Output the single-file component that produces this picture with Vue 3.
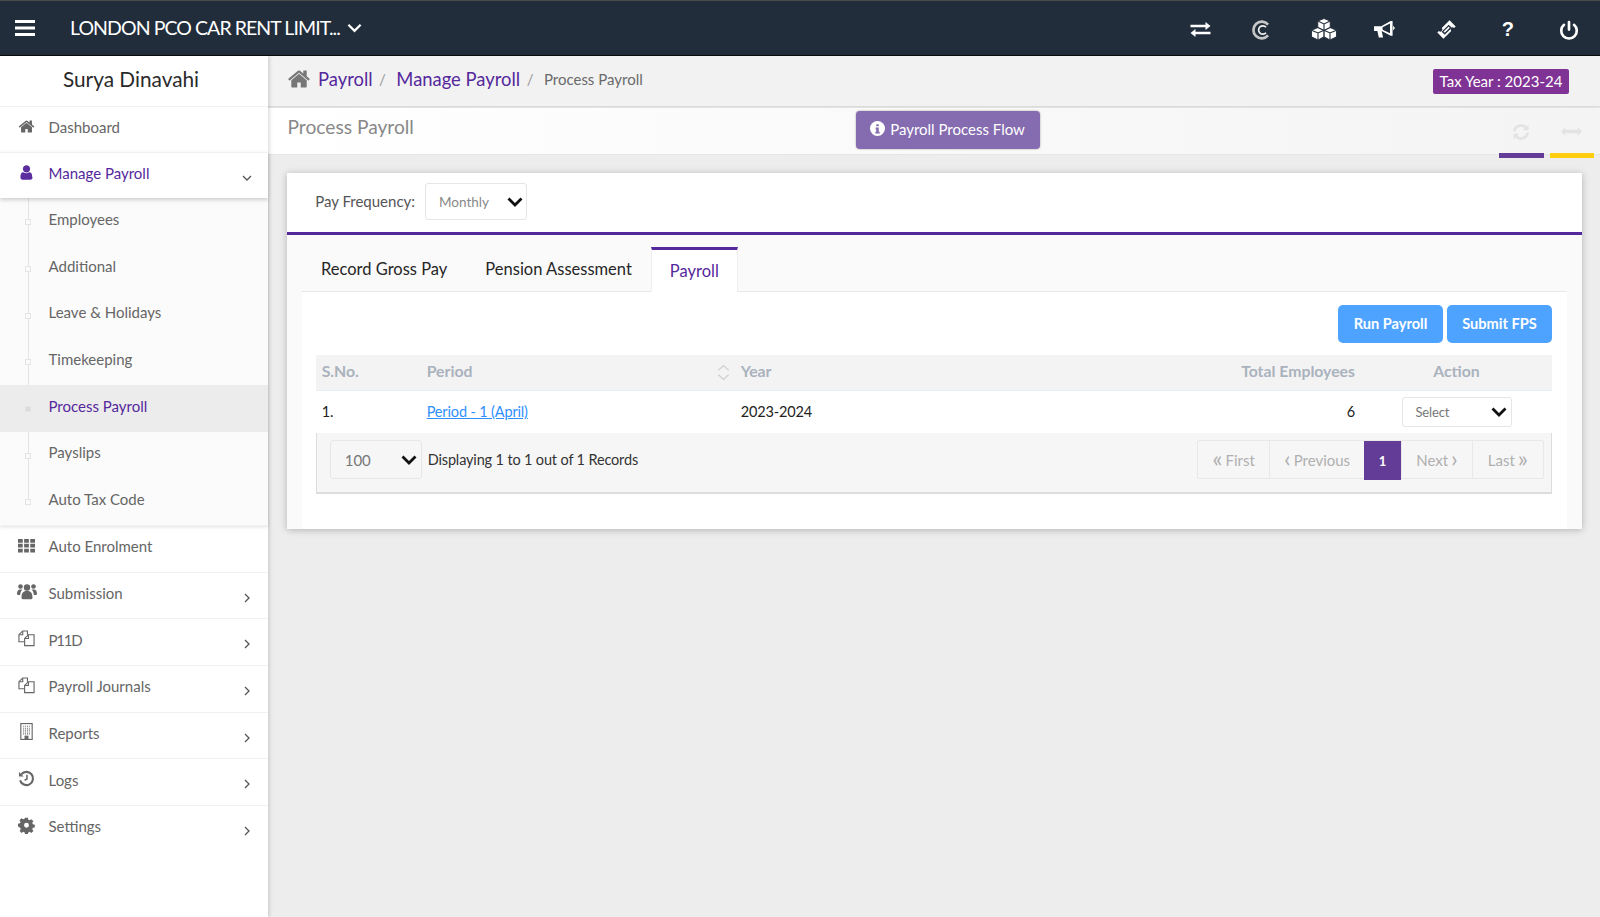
<script setup>
const subItems = [
  { label: 'Employees' }, { label: 'Additional' }, { label: 'Leave & Holidays' }, { label: 'Timekeeping' },
  { label: 'Process Payroll', active: true }, { label: 'Payslips' }, { label: 'Auto Tax Code' }
]
const lowerItems = [
  { label: 'Auto Enrolment', icon: 'grid' },
  { label: 'Submission', icon: 'users', arrow: true },
  { label: 'P11D', icon: 'docs', arrow: true, tight: true },
  { label: 'Payroll Journals', icon: 'docs', arrow: true },
  { label: 'Reports', icon: 'building', arrow: true },
  { label: 'Logs', icon: 'history', arrow: true },
  { label: 'Settings', icon: 'cog', arrow: true }
]
const pages = [
  { pre: '«', text: 'First', w: 71 },
  { pre: '‹', text: 'Previous', w: 95 },
  { text: '1', on: true, w: 37 },
  { text: 'Next', post: '›', w: 71 },
  { text: 'Last', post: '»', w: 71 }
]
const homePath = 'M1472 992v480q0 26-19 45t-45 19h-384v-384h-256v384h-384q-26 0-45-19t-19-45v-480q0-1 .5-3t.5-3l575-474 575 474q1 2 1 6zm223-69l-62 74q-8 9-21 11h-3q-13 0-21-7l-692-577-692 577q-12 8-24 7-13-2-21-11l-62-74q-8-10-7-23.500t11-21.500l719-599q32-26 76-26t76 26l244 204v-195q0-14 9-23t23-9h192q14 0 23 9t9 23v408l219 182q10 8 11 21.500t-7 23.500z'
const userPath = 'M1536 1399q0 109-62.500 187t-150.500 78h-854q-88 0-150.500-79t-62.500-186q0-87 8.500-160.500t31.500-146.500 56-120.500 93-80.500 133-30q125 122 299 122t299-122q76 0 133 30t93 80.500 56 120.500 31.500 146.500 8.500 160.500zm-256-887q0 159-112.500 271.500t-271.500 112.500-271.500-112.500-112.500-271.500 112.500-271.500 271.500-112.500 271.500 112.500 112.500 271.500z'
</script>

<template>
  <div class="app">
    <header class="topbar">
      <svg class="burger" viewBox="0 0 20 16" width="20" height="16"><path d="M0 1.500h20M0 8h20M0 14.500h20" stroke="#fff" stroke-width="3" /></svg>
      <span class="company">LONDON PCO CAR RENT LIMIT...</span>
      <svg class="company-chev" viewBox="0 0 16 10" width="15" height="10"><path d="M1.500 1.500 8 8l6.500-6.500" fill="none" stroke="#fff" stroke-width="2.400" /></svg>
      <div class="top-icons">
        <svg viewBox="0 0 20 15" width="21" height="15" fill="#fff"><path d="M0 2.700h15V0l5 4-5 4V5.300H0zM20 9.700H5V7l-5 4 5 4v-2.700h15z" /></svg>
        <svg viewBox="0 0 24 24" width="20" height="20" fill="none"><path d="M19.300 5.500a10 10 0 1 0 0 13" stroke="#c6c6c6" stroke-width="3.200" /><path d="M16.800 8.800a5 5 0 1 0 0 6.400" stroke="#f2f2f2" stroke-width="2" /></svg>
        <svg viewBox="0 0 26 23" width="26" height="23" fill="#fff" stroke="#222d3b" stroke-width=".9"><path d="M13 .5l6.200 2.600v6.500L13 12.500 6.800 9.600V3.100zM7 9.500l6 2.800v6.500L7 22 .5 18.800v-6.500zM19 9.500l6.500 2.800v6.500L19 22l-6-3.200v-6.500z" /><path d="M6.800 3.100 13 6l6.200-2.900M.5 12.300 7 15l6-2.700M13 12.300 19 15l6.500-2.700M13 6v6.500M7 15v7M19 15v7" fill="none" stroke-width="1.100" /></svg>
        <svg viewBox="0 0 22 20" width="21" height="19" fill="#fff"><path d="M0 6.500h7.500L17.500 1h2v15.500h-2L8 11.500l1.500 7H5L3.500 11.500H0z" /><path d="M16.800 3.800 9 7.500v2.700l7.800 3.700z" fill="#222d3b" /><path d="M20 6l2 2.500-2 2.500z" /></svg>
        <svg viewBox="0 0 24 24" width="21" height="21" fill="#fff"><path d="M15.500 1.500l7 7-1.800 1.800a2.300 2.300 0 0 0-3.300 3.300L8.500 22.500l-7-7 1.800-1.800a2.300 2.300 0 0 0 3.300-3.300z" /><path d="M14.500 6.500 18 10l-8 8-3.500-3.500z" fill="#222d3b" /><path d="M14.400 8.700 15.800 10 10 15.800 8.700 14.400z" /></svg>
        <span class="q">?</span>
        <svg viewBox="0 0 24 24" width="20" height="20" fill="none" stroke="#fff" stroke-width="3.200" stroke-linecap="round"><path d="M12 2.500v9M6 5.800a9.300 9.300 0 1 0 12 0" /></svg>
      </div>
    </header>

    <div class="body">
      <aside class="sidebar">
        <div class="user-name">Surya Dinavahi</div>
        <div class="nav-row">
          <svg class="nav-icon" viewBox="0 0 1792 1792" fill="#666"><path :d="homePath" /></svg>
          <span>Dashboard</span>
        </div>
        <div class="nav-row open">
          <svg class="nav-icon" viewBox="0 0 1792 1792" fill="#5b2d9e"><path :d="userPath" /></svg>
          <span>Manage Payroll</span>
          <svg class="arrow" viewBox="0 0 10 10" width="10" height="10"><path d="M1 3l4 4 4-4" fill="none" stroke="#555" stroke-width="1.300" /></svg>
        </div>
        <div class="sub-list">
          <div v-for="s in subItems" :key="s.label" class="sub-row" :class="{ active: s.active }">
            <i class="tick"></i>
            <span>{{ s.label }}</span>
          </div>
        </div>
        <div v-for="n in lowerItems" :key="n.label" class="nav-row">
          <svg v-if="n.icon === 'grid'" class="nav-icon" viewBox="0 0 18 18" fill="#666"><path d="M0 2h5v4H0zM6.500 2h5v4h-5zM13 2h5v4h-5zM0 7.200h5v4H0zM6.500 7.200h5v4h-5zM13 7.200h5v4h-5zM0 12.400h5v4H0zM6.500 12.400h5v4h-5zM13 12.400h5v4h-5z" /></svg>
          <svg v-else-if="n.icon === 'users'" class="nav-icon wide" viewBox="0 0 20 17" fill="#666"><circle cx="10" cy="4.500" r="3.200" /><circle cx="3.500" cy="3.500" r="2.300" /><circle cx="16.500" cy="3.500" r="2.300" /><path d="M4.500 14.800c0-5 2-7 5.500-7s5.500 2 5.500 7c0 1-1 1.500-2 1.500h-7c-1 0-2-.5-2-1.500zM0 10.500c0-2 1-4 3-4h2.500c-1.500 1.500-2 2.500-2.300 5.500H1c-.5 0-1-.7-1-1.500zM20 10.500c0-2-1-4-3-4h-2.500c1.500 1.500 2 2.500 2.300 5.500H19c.5 0 1-.7 1-1.500z" /></svg>
          <svg v-else-if="n.icon === 'docs'" class="nav-icon" viewBox="0 0 18 18" fill="none" stroke="#666" stroke-width="1.200"><path d="M7 12.500H1V5l4-4h5v4" /><path d="M7 16.500V9l4-4h6v11.500z" /><path d="M5 1v4H1M11 5v4H7" /></svg>
          <svg v-else-if="n.icon === 'building'" class="nav-icon" viewBox="0 0 18 18" fill="none" stroke="#666" stroke-width="1.200"><rect x="3" y="0.600" width="12" height="16.800" /><path d="M5.500 3.500h7M5.500 5.500h7M5.500 7.500h7M5.500 9.500h7M5.500 11.500h7" stroke-dasharray="1 1" /><rect x="7.500" y="14" width="3" height="3.400" fill="#666" /></svg>
          <svg v-else-if="n.icon === 'history'" class="nav-icon" viewBox="0 0 18 18" fill="none" stroke="#666" stroke-width="2.200"><path d="M3.500 4.500A7 7 0 1 1 2.200 11" /><path d="M1 2v5h5z" fill="#666" stroke="none" /><path d="M9.500 5v4.500l-2.500 1.500" stroke-width="1.600" /></svg>
          <svg v-else class="nav-icon" viewBox="0 0 18 18" fill="#666"><path d="M7.500 1h3l.4 2.100 1.500.6 1.800-1.200 2.100 2.100-1.200 1.800.6 1.500 2.100.4v3l-2.100.4-.6 1.500 1.200 1.800-2.100 2.100-1.800-1.200-1.500.6-.4 2.100h-3l-.4-2.100-1.500-.6-1.800 1.200-2.100-2.100 1.200-1.800-.6-1.500L0 10.300v-3l2.100-.4.600-1.500L1.500 3.600l2.100-2.100 1.800 1.200 1.500-.6zM9 6.300a2.600 2.600 0 1 0 0 5.200 2.600 2.600 0 0 0 0-5.200z" transform="translate(0 -.2)" fill-rule="evenodd" /></svg>
          <span :class="{ tight: n.tight }">{{ n.label }}</span>
          <svg v-if="n.arrow" class="arrow" viewBox="0 0 10 10" width="10" height="10"><path d="M3 1l4 4-4 4" fill="none" stroke="#555" stroke-width="1.300" /></svg>
        </div>
      </aside>

      <main class="main">
        <div class="crumbs">
          <svg class="crumb-home" viewBox="0 0 1792 1792" fill="#777"><path :d="homePath" /></svg>
          <a class="crumb-link">Payroll</a><span class="sep">/</span>
          <a class="crumb-link">Manage Payroll</a><span class="sep">/</span>
          <span class="crumb-cur">Process Payroll</span>
          <span class="tax">Tax Year : 2023-24</span>
        </div>

        <div class="title-bar">
          <h1>Process Payroll</h1>
          <button class="flow-btn">
            <svg viewBox="0 0 24 24" width="15" height="15"><circle cx="12" cy="12" r="12" fill="#fff" /><path d="M10 5h4v3.500h-4zM9 10.500h5V17h1.500v3h-7v-3H10v-3.500H9z" fill="#856cb0" /></svg>
            <span>Payroll Process Flow</span>
          </button>
          <div class="title-tools">
            <div class="tool">
              <svg viewBox="0 0 24 24" width="20" height="20" fill="none" stroke="#e3e3e3" stroke-width="3.400"><path d="M4 11a8 8 0 0 1 14-4l2 2M20 13a8 8 0 0 1-14 4l-2-2" /><path d="M21 3v7h-7zM3 21v-7h7z" fill="#e3e3e3" stroke="none" /></svg>
              <i class="bar purple"></i>
            </div>
            <div class="tool tool-arrows">
              <svg viewBox="0 0 24 12" width="21" height="11" fill="#e3e3e3"><path d="M0 6l5-5v3h14V1l5 5-5 5V8H5v3z" /></svg>
              <i class="bar yellow"></i>
            </div>
          </div>
        </div>

        <section class="card">
          <div class="freq">
            <label>Pay Frequency:</label>
            <div class="select freq-select">
              <span>Monthly</span>
              <svg viewBox="0 0 16 10" width="16" height="10"><path d="M1.500 1.500 8 8l6.500-6.500" fill="none" stroke="#111" stroke-width="2.800" /></svg>
            </div>
          </div>

          <div class="card-body">
            <div class="tabs">
              <a class="tab">Record Gross Pay</a>
              <a class="tab">Pension Assessment</a>
              <a class="tab current">Payroll</a>
            </div>
            <div class="pane">
              <div class="actions">
                <button class="blue"><span>Run Payroll</span></button>
                <button class="blue"><span>Submit FPS</span></button>
              </div>
              <div class="thead grid-row">
                <span>S.No.</span>
                <span class="period-h">Period
                  <svg viewBox="0 0 14 18" width="13" height="17" fill="none" stroke="#cfcfcf" stroke-width="1.300"><path d="M1.500 6.500 7 1.500l5.500 5M1.500 11.500l5.500 5 5.500-5" /></svg>
                </span>
                <span>Year</span>
                <span class="r">Total Employees</span>
                <span class="c">Action</span>
              </div>
              <div class="tbody grid-row">
                <span>1.</span>
                <a class="period-link">Period - 1 (April)</a>
                <span>2023-2024</span>
                <span class="r">6</span>
                <div class="select act-select">
                  <span>Select</span>
                  <svg viewBox="0 0 16 10" width="16" height="10"><path d="M1.500 1.500 8 8l6.500-6.500" fill="none" stroke="#111" stroke-width="2.800" /></svg>
                </div>
              </div>
              <div class="tfoot">
                <div class="select size-select">
                  <span>100</span>
                  <svg viewBox="0 0 16 10" width="16" height="10"><path d="M1.500 1.500 8 8l6.500-6.500" fill="none" stroke="#111" stroke-width="2.800" /></svg>
                </div>
                <span class="records">Displaying 1 to 1 out of 1 Records</span>
                <div class="pager">
                  <a v-for="p in pages" :key="p.text" class="page" :class="{ on: p.on }" :style="{ width: p.w + 'px' }"><b v-if="p.pre">{{ p.pre }}</b>{{ p.text }}<b v-if="p.post">{{ p.post }}</b></a>
                </div>
              </div>
            </div>
          </div>
        </section>
      </main>
    </div>
  </div>
</template>

<style>
html, body { margin: 0; padding: 0; }
</style>

<style scoped>
* { box-sizing: border-box; }
.app {
  width: 1600px; height: 917px; overflow: hidden; display: flex; flex-direction: column;
  font-family: "Lato", "Noto Sans", sans-serif; background: #ededed; color: #333;
}
.topbar {
  height: 56px; flex: none; display: flex; align-items: center; background: #222d3b;
  border-top: 1px solid #4a4a4a; border-bottom: 1px solid #0c0c0c; padding-left: 15px; color: #fff;
}
.company { margin-left: 35px; font-size: 19.500px; letter-spacing: -0.93px; padding-bottom: 2px; }
.company-chev { margin-left: 7px; }
.top-icons { margin-left: auto; display: grid; grid-template-columns: repeat(7, 1fr); justify-items: center; align-items: center; width: 430px; padding-top: 3px; }
.q { font-size: 20px; font-weight: 700; font-family: "Liberation Sans", sans-serif; }

.body { flex: 1; display: flex; min-height: 0; }
.sidebar {
  width: 268px; flex: none; background: #fff; box-shadow: 1px 0 4px rgba(0,0,0,.18); position: relative; z-index: 2; font-size: 15px; color: #666;
}
.user-name { height: 49.700px; display: flex; align-items: center; justify-content: center; font-size: 20.800px; color: #2a2a2a; padding-bottom: 5px; padding-right: 6px; }
.nav-row {
  height: 46.670px; display: flex; align-items: center; padding-left: 18px; border-top: 1px solid #f2f2f2; position: relative;
}
.nav-row span { margin-left: 13.500px; padding-bottom: 5px; }
.nav-row span.tight { letter-spacing: -1.200px; }
.nav-icon { width: 17px; height: 17px; flex: none; margin-top: -7px; }
.nav-icon.wide { width: 20px; margin-left: -1.500px; margin-right: -1.500px; }
.arrow { position: absolute; right: 16px; top: 20px; }
.nav-row.open { height: 46px; color: #55289c; box-shadow: 0 2px 4px rgba(0,0,0,.18); z-index: 1; }
.sub-list { background: #fbfbfb; position: relative; box-shadow: 0 2px 3px rgba(0,0,0,.12); }
.sub-list::before { content: ""; position: absolute; left: 28px; top: 0; bottom: 20px; width: 1px; background: #e4e4e4; }
.sub-row { height: 46.670px; display: flex; align-items: center; padding-left: 48.500px; position: relative; }
.sub-row span { padding-bottom: 5px; }
.sub-row.active { background: #ececec; color: #55289c; }
.tick { position: absolute; left: 25px; top: 21px; width: 6px; height: 6px; border: 1px solid #e4e4e4; background: #fbfbfb; }
.sub-row.active .tick { background: #dcdcdc; }

.main { flex: 1; min-width: 0; display: flex; flex-direction: column; }
.crumbs {
  height: 50px; flex: none; display: flex; align-items: center; padding: 0 31px 5px 19px; background: #f2f2f2; box-shadow: 0 1px 3px rgba(0,0,0,.12); position: relative; font-size: 18.400px;
}
.crumb-home { width: 24px; height: 24px; margin-right: 7px; }
.crumb-link { color: #55289c; }
.sep { color: #999; font-size: 15px; margin: 0 10.500px 0 6.500px; }
.crumb-cur { color: #6a6a6a; font-size: 15px; }
.tax {
  margin-left: auto; margin-top: 6px; background: #7f3395; color: #fff; font-size: 15px; height: 25px; line-height: 24px; width: 136px; text-align: center; border-radius: 2px;
}
.title-bar {
  height: 47px; flex: none; display: flex; align-items: center; margin-top: 2px; padding-left: 19.500px; background: linear-gradient(90deg, #fff, #f4f4f4); border-bottom: 1px solid #e6e6e6; position: relative;
}
.title-bar h1 { margin: 0; font-weight: 400; font-size: 19.200px; color: #888; width: 568px; padding-bottom: 9px; }
.flow-btn {
  width: 184px; height: 38px; margin-top: -2px; border: 0; border-radius: 4px; background: #856cb0; color: #fff; font: inherit; font-size: 15px; display: flex; align-items: center; justify-content: center; gap: 5px; box-shadow: 0 0 2px rgba(0,0,0,.4);
}
.flow-btn span { padding-bottom: 3px; }
.flow-btn svg { margin-top: -3px; }
.title-tools { margin-left: auto; display: flex; gap: 6px; padding-right: 6px; }
.tool { width: 44.500px; height: 47px; position: relative; display: flex; justify-content: center; padding-top: 14px; }
.tool-arrows { padding-top: 18px; }
.tool .bar { position: absolute; left: 0; right: 0; bottom: -3px; height: 5px; }
.purple { background: #623c96; }
.yellow { background: #ffcf0f; }

.card {
  margin: 18px 18px 0 18.700px; background: #fff; box-shadow: 0 1px 7px rgba(0,0,0,.25); height: 356px; display: flex; flex-direction: column; position: relative;
}
.freq { height: 62px; flex: none; display: flex; align-items: center; padding-left: 28.500px; border-bottom: 3px solid #55289c; font-size: 15px; color: #555; padding-bottom: 2px; }
.freq label { padding-bottom: 2px; }
.select { display: flex; align-items: center; justify-content: space-between; border: 1px solid #e6e6e6; border-radius: 3px; background: #fff; color: #777; }
.freq-select { width: 102px; height: 37px; margin-left: 10px; padding: 0 3px 0 13px; font-size: 13.500px; color: #888; }
.card-body { flex: 1; background: #fafafa; padding: 12px 15px 0; display: flex; flex-direction: column; }
.tabs { height: 45px; flex: none; display: flex; border-bottom: 1px solid #e8e8e8; font-size: 16.500px; color: #262626; }
.tab { padding: 0 19px; height: 45px; line-height: 45px; }
.tab:first-child { padding-left: 19.300px; }
.tab.current {
  background: #fff; color: #55289c; border-top: 3px solid #55289c; border-left: 1px solid #eee; border-right: 1px solid #eee; height: 46px; line-height: 42px; padding: 0 18px;
}
.pane { flex: 1; background: #fff; padding: 13px 15px 0 14px; font-size: 14.500px; }
.actions { display: flex; justify-content: flex-end; gap: 4px; height: 38px; margin-bottom: 12px; }
.blue { width: 105px; height: 38px; border: 0; border-radius: 5px; background: #4da3ff; color: #fff; font: inherit; font-size: 14.600px; font-weight: 700; padding: 0 0 2px; }
.grid-row { display: grid; grid-template-columns: 105px 314px 1fr 190px 194px; align-items: center; padding-left: 6px; }
.thead { height: 36px; background: #f3f3f3; border-bottom: 1px solid #e6eef6; color: #aab2bd; font-weight: 700; font-size: 15.800px; }
.thead > span { padding-bottom: 4px; }
.period-h svg { margin-top: 4px; }
.period-h { display: flex; align-items: center; justify-content: space-between; padding-right: 11px; }
.tbody { height: 42px; color: #222; letter-spacing: -0.15px; }
.tbody > span, .tbody > a { padding-bottom: 2px; }
.thead > .r, .tbody > .r { text-align: right; padding-right: 3px; }
.c { text-align: center; padding-left: 3px; }
.period-link { color: #2f8fff; text-decoration: underline; }
.act-select { width: 110px; height: 30px; justify-self: center; padding: 0 4px 0 13px; font-size: 13px; margin: -1px 0 0 3px; }
.tfoot {
  height: 61px; display: flex; align-items: center; background: #f6f6f6; border-left: 1px solid #ddd; border-right: 1px solid #ddd; border-bottom: 2px solid #ddd; padding: 0 7px 6px 13px;
}
.size-select { width: 92px; height: 39px; background: #f6f6f6; padding: 0 4px 0 14px; font-size: 15px; }
.records { margin-left: 6px; color: #333; letter-spacing: -0.15px; }
.pager { margin-left: auto; display: flex; margin-top: 0; border: 1px solid #e8e8e8; border-radius: 2px; height: 39px; }
.page { display: flex; align-items: center; justify-content: center; gap: 3px; color: #b0b0b0; border-left: 1px solid #e8e8e8; font-size: 15px; }
.page:first-child { border-left: 0; }
.page b { font-weight: 400; font-size: 24px; line-height: 1; margin-top: -4px; }
.page.on { background: #623c96; color: #fff; font-weight: 700; font-size: 13px; border: 0; height: 39px; }
</style>
